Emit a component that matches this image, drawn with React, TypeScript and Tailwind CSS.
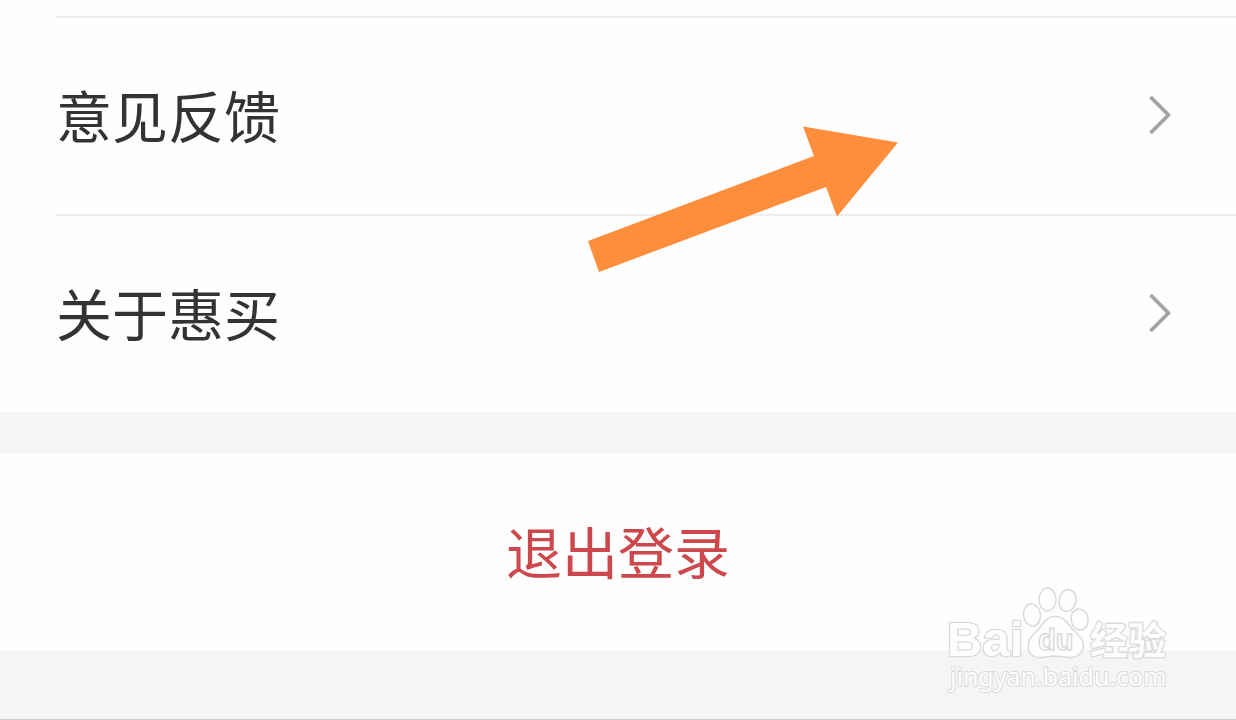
import React from 'react';

const menuItems = [
  { id: 'feedback', label: '意见反馈' },
  { id: 'about', label: '关于惠买' },
];

const ChevronRight: React.FC = () => (
  <svg className="w-6 h-10 shrink-0" viewBox="0 0 24 40" fill="none" aria-hidden="true">
    <path d="M2.500 1L20.500 19L2.500 37" stroke="#a3a3a3" strokeWidth="3.8" strokeLinejoin="round" />
  </svg>
);

const PointerArrow: React.FC = () => (
  <svg
    className="absolute left-[588px] top-[126px] w-[310px] h-[147px] pointer-events-none"
    viewBox="0 0 310 147"
    aria-hidden="true"
  >
    <path d="M215 0.5L310 16.5L249 90.5L238 61L11 146L0 115L226 30Z" fill="#ff8e3c" />
  </svg>
);

const Watermark: React.FC = () => (
  <svg
    className="absolute right-14 top-[580px] w-60 h-[120px] pointer-events-none"
    viewBox="0 0 240 120"
    fill="#fefefe"
    stroke="#dadada"
    strokeWidth="1.5"
    strokeLinejoin="round"
    aria-label="Baidu 经验"
  >
    <g strokeWidth="2.6" style={{ paintOrder: 'stroke' }}>
      <text x="7" y="76" className="font-['Liberation_Sans',sans-serif] font-bold text-[49px]">Bai</text>
      <text x="150" y="74" className="font-['Noto_Sans_CJK_SC',sans-serif] font-bold text-[38px]">经验</text>
      <text x="10" y="106" strokeWidth="2" className="font-['Noto_Sans',sans-serif] text-[25px]">jingyan.baidu.com</text>
    </g>
    <ellipse cx="92" cy="35" rx="8.5" ry="11" transform="rotate(-8 92 35)" />
    <ellipse cx="107.500" cy="19.5" rx="8.5" ry="11.5" />
    <ellipse cx="127.500" cy="20.500" rx="8.5" ry="11" transform="rotate(12 127.500 20.500)" />
    <ellipse cx="139.500" cy="39.500" rx="8.5" ry="10.5" transform="rotate(-10 139.500 39.500)" />
    <path d="M115 36.500C108 36.500 104 41 101 46C98 51 91 55 89 61C86 71 91 77 99 77.500C105 78 109 76 115 76C121 76 126 78 132 77.500C140 76.500 145 70 143 62C141 55 133 51 130 46C126 40 122 36.500 115 36.500Z" />
    <text x="98" y="70" className="font-['Liberation_Sans',sans-serif] font-bold text-[29px]">du</text>
  </svg>
);

const App: React.FC = () => {
  return (
    <main className="relative flex flex-col min-h-screen overflow-hidden bg-[#f5f5f5] border-b border-[#cfcfcf] font-['Noto_Sans_CJK_SC',sans-serif] text-[56px] leading-none">
      <nav className="bg-[#fefefe] pt-4">
        <ul>
          {menuItems.map(item => (
            <li key={item.id} className="ml-14 border-t-2 border-[#eeeeee]">
              <button type="button" className="flex items-center justify-between w-full h-[196px] pr-16 text-[#333333]">
                <span className="pb-1">{item.label}</span>
                <ChevronRight />
              </button>
            </li>
          ))}
        </ul>
      </nav>

      <button type="button" className="w-full h-[196px] mt-[42px] pb-1 bg-[#fefefe] text-[#cc484c]">
        退出登录
      </button>

      <PointerArrow />
      <Watermark />
    </main>
  );
};

export default App;
